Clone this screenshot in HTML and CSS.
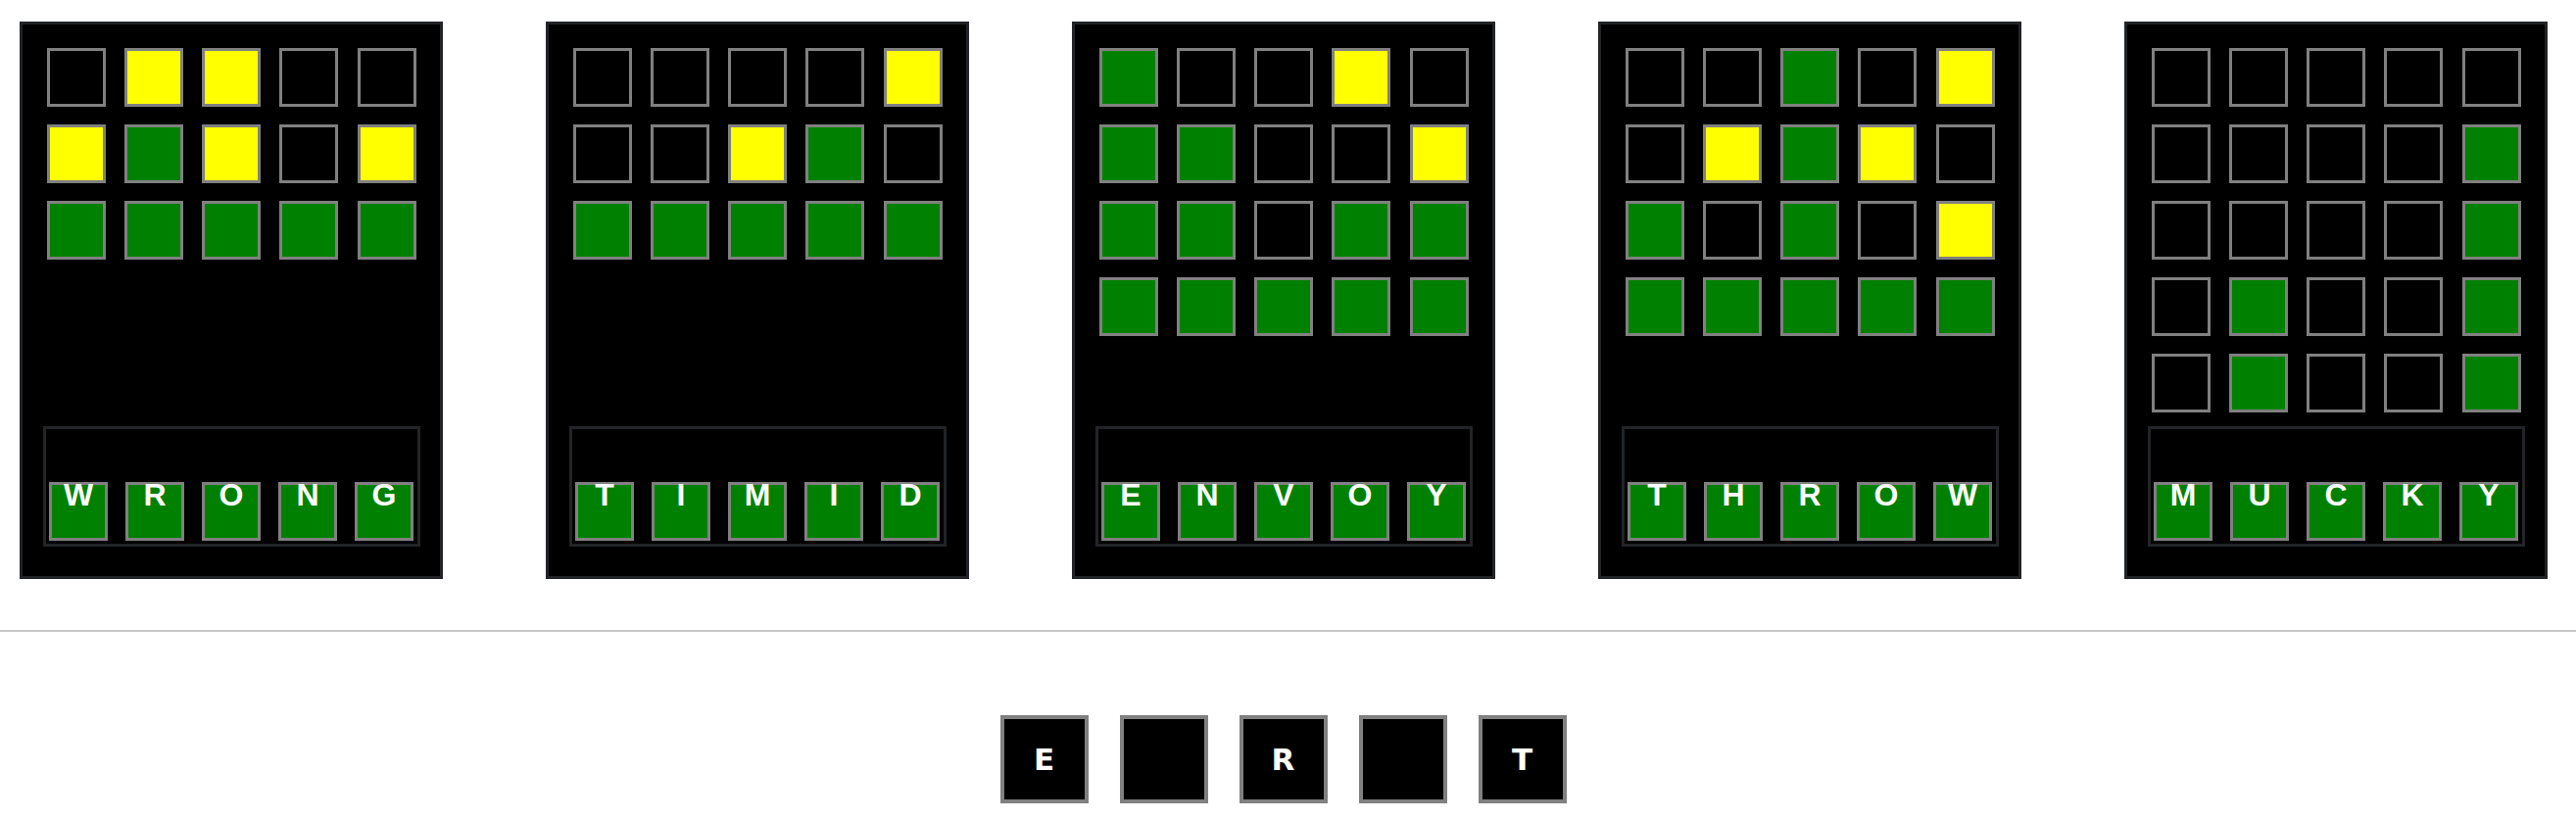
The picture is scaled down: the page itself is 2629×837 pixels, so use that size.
FILE: index.html
```html
<!DOCTYPE html>
<html>
<head>
<meta charset="utf-8">
<title>Wordle boards</title>
<link rel="stylesheet" href="styles.css">
</head>
<body>
<div class="boards">
  <div class="card">
    <div class="grid">
      <div class="row"><div class="tile"></div><div class="tile y"></div><div class="tile y"></div><div class="tile"></div><div class="tile"></div></div>
      <div class="row"><div class="tile y"></div><div class="tile g"></div><div class="tile y"></div><div class="tile"></div><div class="tile y"></div></div>
      <div class="row"><div class="tile g"></div><div class="tile g"></div><div class="tile g"></div><div class="tile g"></div><div class="tile g"></div></div>
    </div>
    <div class="answer">
      <div class="tile g letter">W</div><div class="tile g letter">R</div><div class="tile g letter">O</div><div class="tile g letter">N</div><div class="tile g letter">G</div>
    </div>
  </div>
  <div class="card">
    <div class="grid">
      <div class="row"><div class="tile"></div><div class="tile"></div><div class="tile"></div><div class="tile"></div><div class="tile y"></div></div>
      <div class="row"><div class="tile"></div><div class="tile"></div><div class="tile y"></div><div class="tile g"></div><div class="tile"></div></div>
      <div class="row"><div class="tile g"></div><div class="tile g"></div><div class="tile g"></div><div class="tile g"></div><div class="tile g"></div></div>
    </div>
    <div class="answer">
      <div class="tile g letter">T</div><div class="tile g letter">I</div><div class="tile g letter">M</div><div class="tile g letter">I</div><div class="tile g letter">D</div>
    </div>
  </div>
  <div class="card">
    <div class="grid">
      <div class="row"><div class="tile g"></div><div class="tile"></div><div class="tile"></div><div class="tile y"></div><div class="tile"></div></div>
      <div class="row"><div class="tile g"></div><div class="tile g"></div><div class="tile"></div><div class="tile"></div><div class="tile y"></div></div>
      <div class="row"><div class="tile g"></div><div class="tile g"></div><div class="tile"></div><div class="tile g"></div><div class="tile g"></div></div>
      <div class="row"><div class="tile g"></div><div class="tile g"></div><div class="tile g"></div><div class="tile g"></div><div class="tile g"></div></div>
    </div>
    <div class="answer">
      <div class="tile g letter">E</div><div class="tile g letter">N</div><div class="tile g letter">V</div><div class="tile g letter">O</div><div class="tile g letter">Y</div>
    </div>
  </div>
  <div class="card">
    <div class="grid">
      <div class="row"><div class="tile"></div><div class="tile"></div><div class="tile g"></div><div class="tile"></div><div class="tile y"></div></div>
      <div class="row"><div class="tile"></div><div class="tile y"></div><div class="tile g"></div><div class="tile y"></div><div class="tile"></div></div>
      <div class="row"><div class="tile g"></div><div class="tile"></div><div class="tile g"></div><div class="tile"></div><div class="tile y"></div></div>
      <div class="row"><div class="tile g"></div><div class="tile g"></div><div class="tile g"></div><div class="tile g"></div><div class="tile g"></div></div>
    </div>
    <div class="answer">
      <div class="tile g letter">T</div><div class="tile g letter">H</div><div class="tile g letter">R</div><div class="tile g letter">O</div><div class="tile g letter">W</div>
    </div>
  </div>
  <div class="card">
    <div class="grid">
      <div class="row"><div class="tile"></div><div class="tile"></div><div class="tile"></div><div class="tile"></div><div class="tile"></div></div>
      <div class="row"><div class="tile"></div><div class="tile"></div><div class="tile"></div><div class="tile"></div><div class="tile g"></div></div>
      <div class="row"><div class="tile"></div><div class="tile"></div><div class="tile"></div><div class="tile"></div><div class="tile g"></div></div>
      <div class="row"><div class="tile"></div><div class="tile g"></div><div class="tile"></div><div class="tile"></div><div class="tile g"></div></div>
      <div class="row"><div class="tile"></div><div class="tile g"></div><div class="tile"></div><div class="tile"></div><div class="tile g"></div></div>
    </div>
    <div class="answer">
      <div class="tile g letter">M</div><div class="tile g letter">U</div><div class="tile g letter">C</div><div class="tile g letter">K</div><div class="tile g letter">Y</div>
    </div>
  </div>
</div>
<div class="divider"></div>
<div class="slots">
  <div class="slot">E</div>
  <div class="slot"></div>
  <div class="slot">R</div>
  <div class="slot"></div>
  <div class="slot">T</div>
</div>
</body>
</html>
```
FILE: styles.css
```css
html, body {
  margin: 0;
  padding: 0;
  background: #ffffff;
}
body {
  font-family: "Liberation Sans", Arial, sans-serif;
  width: 2629px;
  height: 837px;
  overflow: hidden;
}
.boards {
  display: flex;
  gap: 105px;
  padding: 22px 0 0 20px;
}
.card {
  box-sizing: border-box;
  width: 432px;
  height: 569px;
  border: 3px solid #222427;
  background: #000000;
  padding-top: 24px;
  display: flex;
  flex-direction: column;
  align-items: center;
}
.grid {
  height: 372px;
  display: flex;
  flex-direction: column;
  gap: 18px;
}
.row {
  display: flex;
  gap: 19.25px;
}
.tile {
  box-sizing: border-box;
  width: 60px;
  height: 60px;
  border: 3px solid #808080;
  background: #000000;
}
.tile.g {
  background: #008000;
}
.tile.y {
  background: #ffff00;
}
.answer {
  box-sizing: border-box;
  margin-top: 14px;
  width: 385px;
  height: 123px;
  border: 3px solid #222427;
  display: flex;
  justify-content: center;
  align-items: flex-end;
  gap: 18px;
  padding-bottom: 3px;
}
.letter {
  display: flex;
  justify-content: center;
  align-items: flex-start;
  color: #ffffff;
  font-family: "Liberation Sans", Arial, sans-serif;
  font-weight: 700;
  font-size: 32px;
  line-height: 20px;
}
.divider {
  margin-top: 52px;
  height: 2px;
  background: #c8c8c8;
}
.slots {
  margin-top: 85px;
  display: flex;
  justify-content: center;
  gap: 32px;
  padding-right: 10px;
}
.slot {
  box-sizing: border-box;
  width: 90px;
  height: 90px;
  border: 4px solid #808080;
  background: #000000;
  display: flex;
  justify-content: center;
  align-items: center;
  color: #ffffff;
  font-family: "DejaVu Sans", sans-serif;
  font-weight: 700;
  font-size: 31px;
}
```
